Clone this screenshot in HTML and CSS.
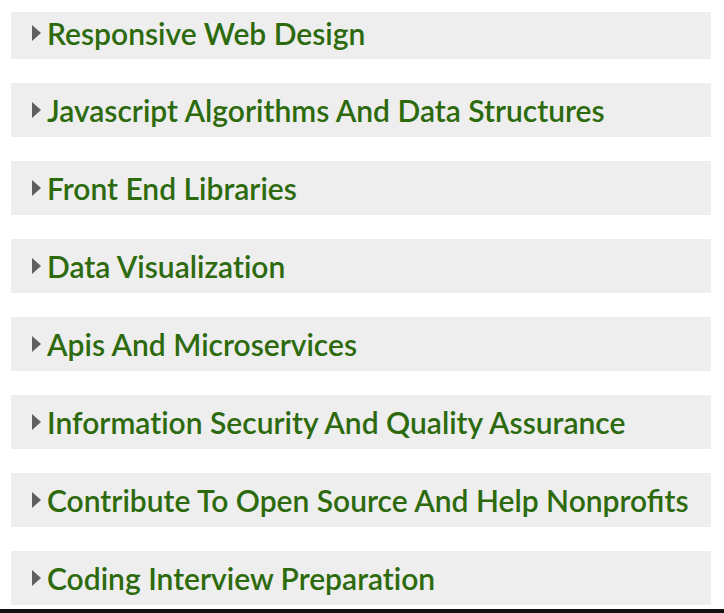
FILE: index.html
```html
<!DOCTYPE html>
<html>
<head>
<meta charset="utf-8">
<link rel="stylesheet" href="styles.css">
</head>
<body>
<div class="list">
  <div class="item first"><span class="arrow"></span><span class="label">Responsive Web Design</span></div>
  <div class="item"><span class="arrow"></span><span class="label">Javascript Algorithms And Data Structures</span></div>
  <div class="item"><span class="arrow"></span><span class="label">Front End Libraries</span></div>
  <div class="item"><span class="arrow"></span><span class="label">Data Visualization</span></div>
  <div class="item"><span class="arrow"></span><span class="label">Apis And Microservices</span></div>
  <div class="item"><span class="arrow"></span><span class="label">Information Security And Quality Assurance</span></div>
  <div class="item"><span class="arrow"></span><span class="label liga">Contribute To Open Source And Help Nonprofits</span></div>
  <div class="item"><span class="arrow"></span><span class="label">Coding Interview Preparation</span></div>
</div>
<div class="bottom-line"></div>
</body>
</html>
```
FILE: styles.css
```css
html, body {
  margin: 0;
  padding: 0;
  background: #ffffff;
  overflow: hidden;
}
body {
  width: 724px;
  height: 613px;
  position: relative;
  font-family: Lato, "Open Sans", sans-serif;
}
.list {
  display: flex;
  flex-direction: column;
  gap: 24px;
  padding: 12px 13px 0 11px;
}
.item {
  display: flex;
  align-items: center;
  height: 54px;
  background: #eeeeee;
  padding-left: 21px;
  box-sizing: border-box;
}
.item.first {
  height: 47px;
  padding-bottom: 5px;
}
.arrow {
  flex: none;
  width: 0;
  height: 0;
  border-top: 8px solid transparent;
  border-bottom: 8px solid transparent;
  border-left: 9px solid #5f5f5f;
  margin-right: 6px;
}
.label {
  color: #2d6a0d;
  font-size: 30px;
  font-weight: 600;
  line-height: 1;
  font-variant-ligatures: none;
  font-feature-settings: "liga" 0;
}
.label.liga {
  font-variant-ligatures: common-ligatures;
  font-feature-settings: "liga" 1;
}
.bottom-line {
  position: absolute;
  left: 0;
  right: 0;
  bottom: 0;
  height: 4px;
  background: #111111;
}
```
